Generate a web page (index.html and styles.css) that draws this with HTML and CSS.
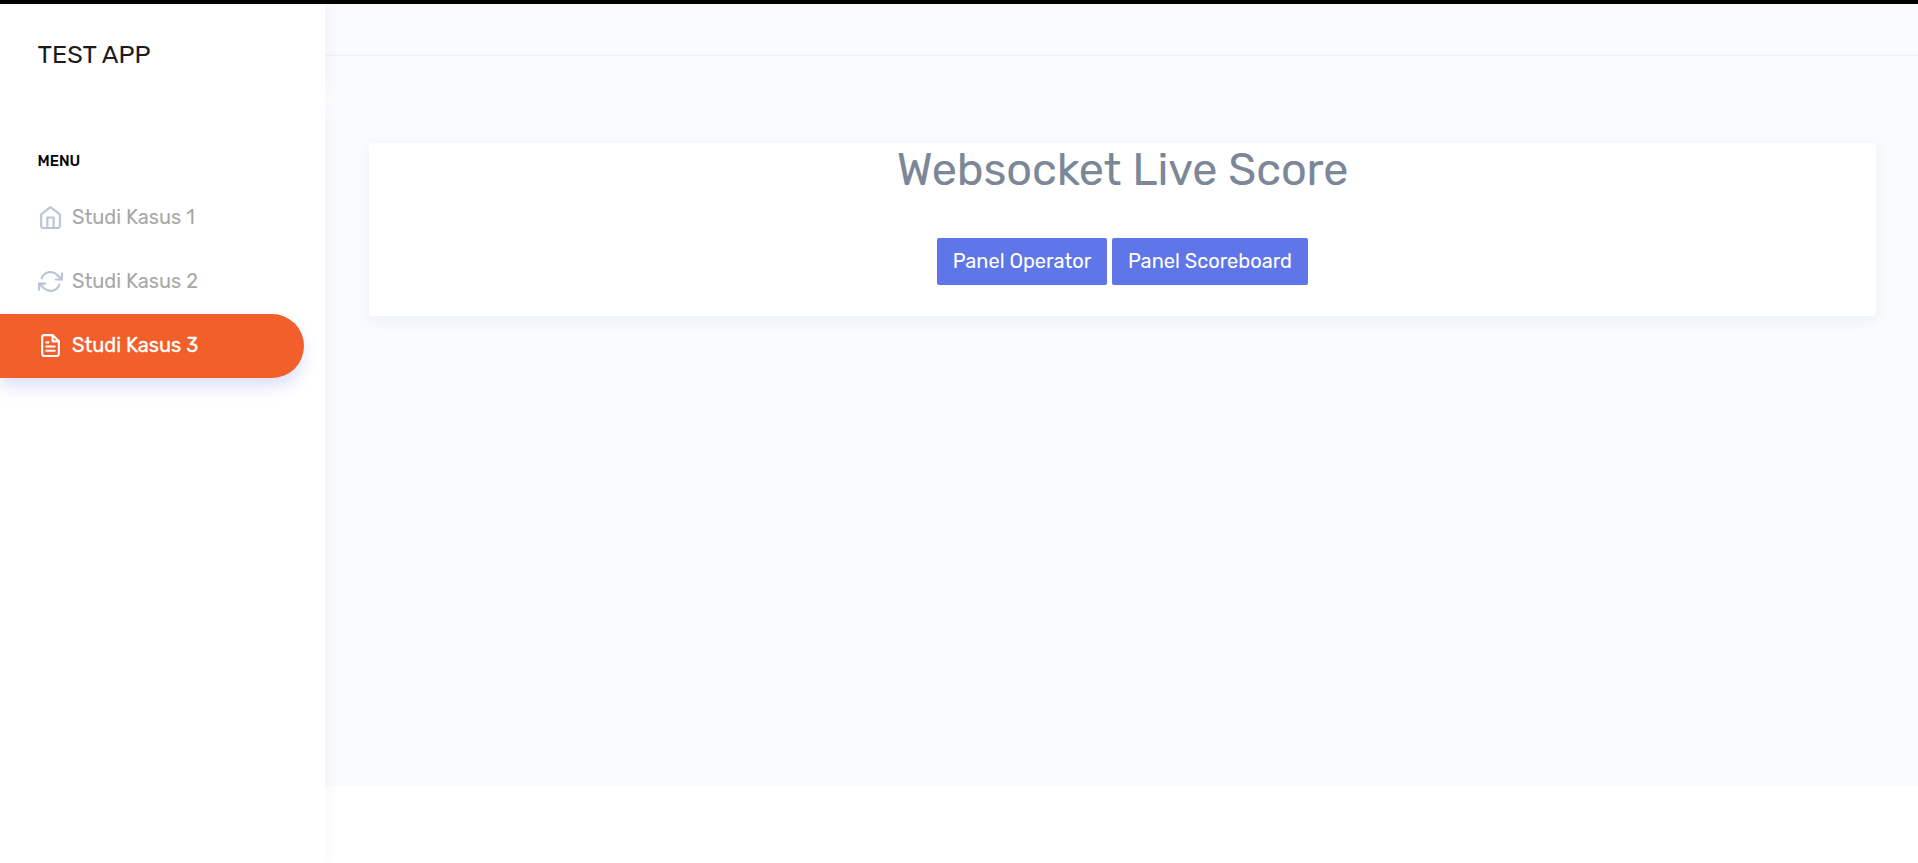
FILE: index.html
```
<!DOCTYPE html>
<html lang="id">
<head>
<meta charset="utf-8">
<title>Test App</title>
<link rel="stylesheet" href="styles.css">
</head>
<body>
<div class="app">
  <aside class="sidebar">
    <div class="brand">TEST APP</div>
    <div class="sidebar-body">
      <div class="menu-title">MENU</div>
      <nav class="menu">
        <a class="item"><svg class="icon" viewBox="0 0 24 24"><path d="M3 9l9-7 9 7v11a2 2 0 0 1-2 2H5a2 2 0 0 1-2-2z"/><path d="M9 22V12h6v10"/></svg><span class="label">Studi Kasus 1</span></a>
        <a class="item"><svg class="icon" viewBox="0 0 24 24"><path d="M23 4v6h-6M1 20v-6h6"/><path d="M3.51 9a9 9 0 0 1 14.85-3.36L23 10M1 14l4.64 4.36A9 9 0 0 0 20.49 15"/></svg><span class="label">Studi Kasus 2</span></a>
        <a class="item active"><svg class="icon" viewBox="0 0 24 24"><path d="M14 2H6a2 2 0 0 0-2 2v16a2 2 0 0 0 2 2h12a2 2 0 0 0 2-2V8z"/><path d="M14 2v6h6M16 13H8M16 17H8M10 9H8"/></svg><span class="label">Studi Kasus 3</span></a>
      </nav>
    </div>
  </aside>
  <main class="content">
    <header class="topbar"></header>
    <section class="card">
      <h1 class="title">Websocket Live Score</h1>
      <div class="actions">
        <a class="btn operator">Panel Operator</a>
        <a class="btn scoreboard">Panel Scoreboard</a>
      </div>
    </section>
  </main>
</div>
</body>
</html>
```
FILE: styles.css
```
* { box-sizing: border-box; }
body { margin: 0; background: #fff; font-family: Rubik, Roboto, sans-serif; font-size: 20px; color: #7c8798; overflow: hidden; }
.app { display: flex; height: 863px; border-top: 4px solid #000; }
.sidebar { position: relative; z-index: 1; display: flex; flex-direction: column; width: 325px; flex: none; }
.brand { height: 101px; padding: 36px 38px 0 37.5px; background: #fff; font-size: 25px; line-height: 30px; color: #1c1c1c; box-shadow: 1px -10px 20px rgba(1, 41, 112, 0.045); clip-path: inset(0 -14px 0 0); }
.sidebar-body { flex: 1; background: #fff; box-shadow: 1px 0 16px rgba(20, 50, 112, 0.045); clip-path: inset(0 -14px 0 0); }
.menu-title { height: 84px; padding: 41px 38px 0 37.5px; font-size: 15px; line-height: 30px; font-weight: 500; color: #000; }
.menu { display: flex; flex-direction: column; margin-top: -3px; }
.item { display: flex; align-items: center; width: 304px; height: 64px; padding-left: 37.5px; color: #a7a7a7; }
.icon { width: 25px; height: 25px; margin: 0 9.5px 1px 0; fill: none; stroke: #b9c4d6; stroke-width: 2; stroke-linecap: round; stroke-linejoin: round; }
.label { line-height: 30px; margin-top: -2px; white-space: nowrap; }
.active { color: #fff; background: #f25f2b; border-radius: 0 32px 32px 0; box-shadow: 0 9px 15px 0 rgba(95, 118, 232, 0.21); }
.active .label { -webkit-text-stroke: 0.3px #fff; }
.active .icon { stroke: #fff; }
.content { flex: 1; height: 783px; background: #f9fbfd; }
.topbar { height: 52px; border-bottom: 1px solid #edf2f6; }
.card { height: 173px; margin: 87px 42px 0 44px; background: #fff; border-radius: 4px; box-shadow: 0 4px 16px rgba(30, 70, 117, 0.06); text-align: center; }
.title { margin: 0; height: 95px; font-size: 45px; line-height: 54px; font-weight: 400; letter-spacing: -0.1px; }
.actions { display: flex; justify-content: center; gap: 5px; }
.btn { height: 47px; line-height: 46px; background: #5f76e8; color: #fff; border-radius: 2px; white-space: nowrap; }
.operator { width: 170px; }
.scoreboard { width: 196px; }
```
